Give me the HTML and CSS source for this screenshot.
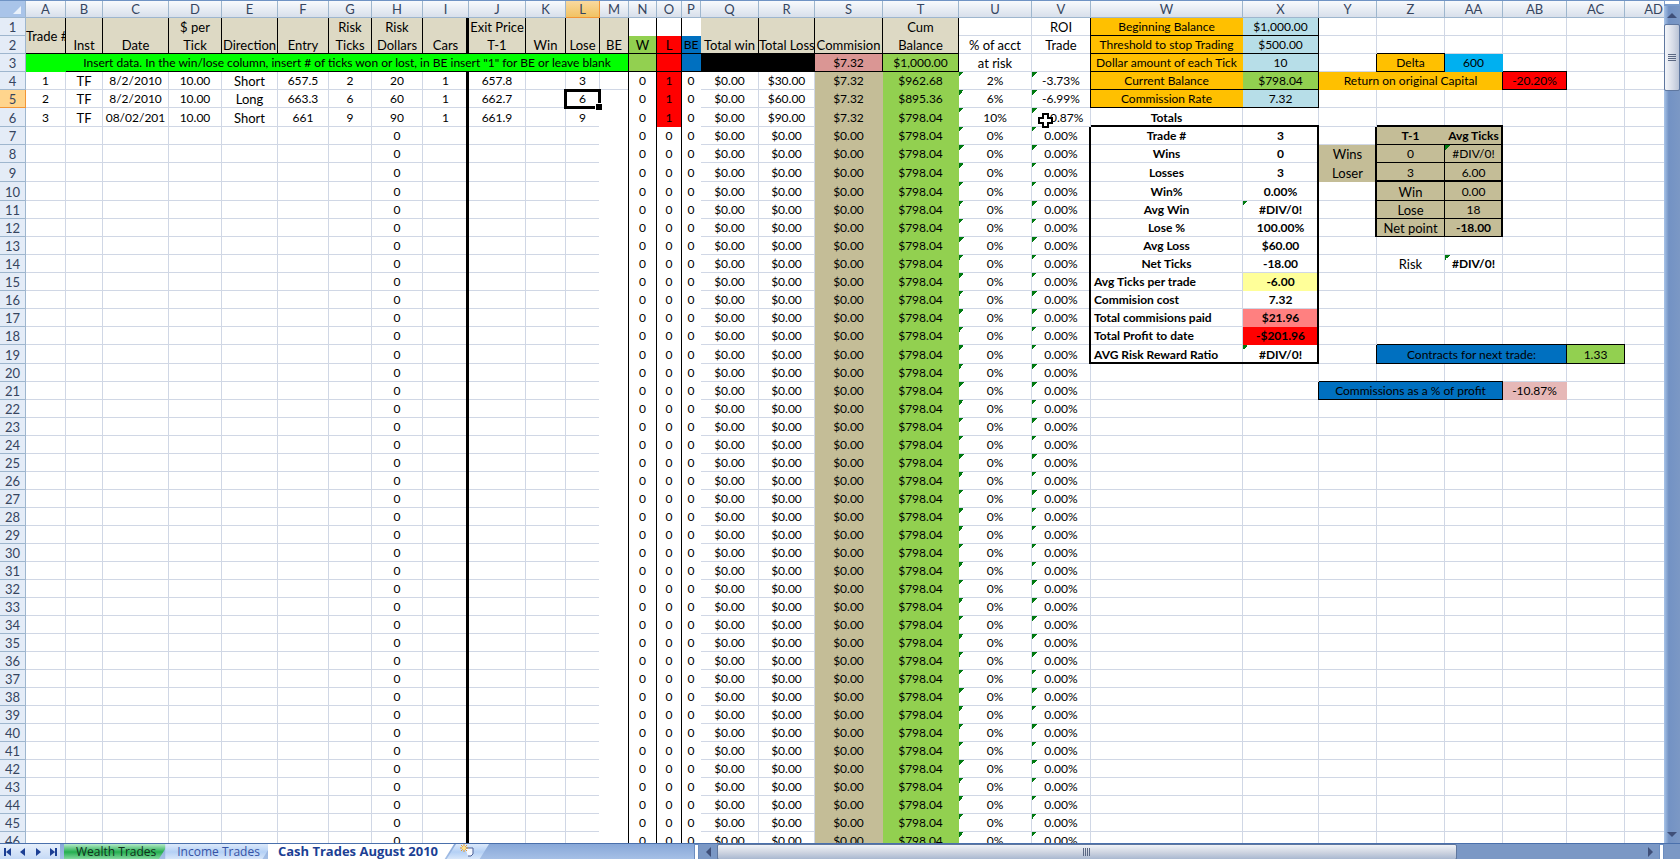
FILE: index.html
```html
<!DOCTYPE html>
<html lang="en">
<head>
  <meta charset="UTF-8" />
  <meta name="viewport" content="width=device-width, initial-scale=1.0" />
  <title>Cash Trades August 2010</title>
  <link rel="stylesheet" href="styles.css">
</head>
<body>
  <main class="workbook">
    <div class="sheet">
      <table class="grid">
        <colgroup id="cols"></colgroup>
        <thead><tr id="letters"></tr></thead>
        <tbody id="rows"></tbody>
      </table>
    </div>

    <div class="vscroll">
      <div class="split-h"></div>
      <button class="arrow" aria-label="Scroll up">
        <svg width="10" height="5" viewBox="0 0 10 5"><path d="M0 5 5 0l5 5z" fill="#3f4f78"/></svg>
      </button>
      <div class="vthumb"><i></i><i></i><i></i><i></i></div>
      <div class="vtrack"></div>
      <button class="arrow" aria-label="Scroll down">
        <svg width="10" height="5" viewBox="0 0 10 5"><path d="M0 0h10L5 5z" fill="#3f4f78"/></svg>
      </button>
    </div>

    <footer class="bottom">
      <nav class="tabs">
        <button class="nav" aria-label="First sheet"><svg width="8" height="8" viewBox="0 0 8 8"><path d="M0 0h2v8H0zM7 0v8L2 4z"/></svg></button>
        <button class="nav" aria-label="Previous sheet"><svg width="8" height="8" viewBox="0 0 8 8"><path d="M6 0v8L1 4z"/></svg></button>
        <button class="nav" aria-label="Next sheet"><svg width="8" height="8" viewBox="0 0 8 8"><path d="M2 0v8l5-4z"/></svg></button>
        <button class="nav" aria-label="Last sheet"><svg width="8" height="8" viewBox="0 0 8 8"><path d="M6 0h2v8H6zM1 0v8l5-4z"/></svg></button>
        <a href="#wealth" class="tab wealth">Wealth Trades</a>
        <a href="#income" class="tab income">Income Trades</a>
        <a href="#cash" class="tab current">Cash Trades August 2010</a>
        <button class="tab add" aria-label="Insert sheet">
          <svg width="15" height="13" viewBox="0 0 15 13">
            <path d="M5 4h8v6l-2 2H8" fill="#f4f8ff" stroke="#4a5f96"/>
            <path d="M4 0v8M0 4h8M1 1l6 6M7 1 1 7" stroke="#e2982c"/>
            <circle cx="4" cy="4" r="2" fill="#ffe48a"/>
          </svg>
        </button>
      </nav>
      <div class="hscroll">
        <div class="split-v"></div>
        <button class="arrow" aria-label="Scroll left">
          <svg width="5" height="10" viewBox="0 0 5 10"><path d="M5 0v10L0 5z" fill="#3f4f78"/></svg>
        </button>
        <div class="hthumb"><i></i><i></i><i></i><i></i></div>
        <div class="htrack"></div>
        <button class="arrow" aria-label="Scroll right">
          <svg width="5" height="10" viewBox="0 0 5 10"><path d="M0 0v10l5-5z" fill="#3f4f78"/></svg>
        </button>
        <div class="split-v"></div>
      </div>
    </footer>
  </main>
  <script src="script.js"></script>
</body>
</html>
```

FILE: styles.css
```css
* {
  box-sizing: border-box;
}

body {
  margin: 0;
  font-family: Lato, 'Liberation Sans', sans-serif;
  font-size: 13px;
  color: #000;
  background: #fff;
}

button {
  border: none;
  padding: 0;
  background: none;
}

.workbook {
  display: grid;
  grid-template-columns: 1fr 16px;
  grid-template-rows: 1fr 16px;
  height: 100vh;
  overflow: hidden;
}

.sheet {
  overflow: hidden;
  min-width: 0;
  min-height: 0;
}

/* cells */

.grid {
  table-layout: fixed;
  width: 0;
  border-collapse: separate;
  border-spacing: 0;
}

/* lines are inset shadows so that they cross without mitred corners */
.grid th,
.grid td {
  --right: #d0d7e5;
  --bottom: #d0d7e5;
  --rw: -1px;
  --bw: -1px;
  height: 18px;
  padding: 0 1px 1px 0;
  line-height: 16px;
  text-align: center;
  vertical-align: bottom;
  white-space: nowrap;
  box-shadow: inset var(--rw) 0 var(--right), inset 0 var(--bw) var(--bottom);
}

.grid td {
  position: relative;
}

.grid .tall td,
.grid .tall th {
  height: 19px;
}

.grid th {
  --right: #9eb6ce;
  --bottom: #9eb6ce;
  font-weight: normal;
  color: #36455f;
  background: #e4ecf7;
}

.grid thead th {
  background: linear-gradient(#f8fafd, #d6deea);
  border-top: 1px solid #6f93c4;
}

.grid thead .corner {
  background: #a9c4e9;
}

.corner svg {
  display: block;
  margin: 2px 3px 2px auto;
}

.grid thead .on {
  --right: #f29536;
  --bottom: #f29536;
  background: linear-gradient(#f9d99f, #f1c15f);
}

.grid tbody th.on {
  --right: #f29536;
  --bottom: #f29536;
  background: #ffd58d;
}

.grid .beige { --right: #ddd9c4; --bottom: #ddd9c4; background-color: #ddd9c4; }
.grid .tan { --right: #c4bd97; --bottom: #c4bd97; background-color: #c4bd97; }
.grid .lime { --right: #0f0; --bottom: #0f0; background-color: #0f0; }
.grid .green { --right: #92d050; --bottom: #92d050; background-color: #92d050; }
.grid .red { --right: #f00; --bottom: #f00; background-color: #f00; }
.grid .blue { --right: #0070c0; --bottom: #0070c0; background-color: #0070c0; }
.grid .sky { --right: #00b0f0; --bottom: #00b0f0; background-color: #00b0f0; }
.grid .pale { --right: #b7dee8; --bottom: #b7dee8; background-color: #b7dee8; }
.grid .orange { --right: #ffc000; --bottom: #ffc000; background-color: #ffc000; }
.grid .yellow { --right: #ff9; --bottom: #ff9; background-color: #ff9; }
.grid .salmon { --right: #ff8080; --bottom: #ff8080; background-color: #ff8080; }
.grid .rose { --right: #da9694; --bottom: #da9694; background-color: #da9694; }
.grid .pink { --right: #e6b8b7; --bottom: #e6b8b7; background-color: #e6b8b7; }
.grid .black { --right: #000; --bottom: #000; background-color: #000; }
.grid .white { --right: #fff; --bottom: #fff; background-color: #fff; }
.grid .open { --right: #fff; }

.grid .r1 { --right: #000; }
.grid .r2 { --right: #000; --rw: -2px; }
.grid .r3 { --right: #000; --rw: -3px; }
.grid .b1 { --bottom: #000; }
.grid .b2 { --bottom: #000; --bw: -2px; }

.grid .b1,
.grid .b2 {
  box-shadow: inset 0 var(--bw) var(--bottom), inset var(--rw) 0 var(--right);
}

.grid .mid { vertical-align: middle; }
.grid .bold { font-weight: bold; }

.grid .bold,
.grid .num,
.grid .orange,
.grid .blue,
.grid .lime,
.grid .flag {
  font-size: 12px;
}

.grid .label {
  padding-left: 3px;
  text-align: left;
}

.grid .flag {
  background-image: linear-gradient(135deg, #007a10 50%, transparent 50%);
  background-size: 5px 5px;
  background-repeat: no-repeat;
}

.selection {
  position: absolute;
  z-index: 1;
  inset: -1px -1px -1px -2px;
  border: 3px solid #000;
}

.selection::after {
  content: '';
  position: absolute;
  right: -4px;
  bottom: -4px;
  width: 6px;
  height: 6px;
  background: #000;
  border: 1px solid #fff;
  border-width: 1px 0 0 1px;
}

.cursor {
  position: absolute;
  z-index: 1;
  left: 6px;
  top: 5px;
}

/* scroll bars */

.vscroll {
  display: flex;
  flex-direction: column;
  background: linear-gradient(90deg, #a8c4e8, #7392c4 30%, #7b98c5);
}

.arrow {
  display: flex;
  align-items: center;
  justify-content: center;
  flex: 0 0 18px;
}

.split-h {
  flex: 0 0 6px;
  background: #fff;
  border: 1px solid #7b9ccb;
  border-bottom: 2px solid #7b9ccb;
}

.vthumb {
  display: flex;
  flex-direction: column;
  align-items: center;
  justify-content: center;
  gap: 1px;
  flex: 0 0 8%;
  border: 1px solid #5f779f;
  border-radius: 2px;
  background: linear-gradient(90deg, #f4f6fa, #d5dae6 60%, #b9c3d6);
}

.vthumb i {
  width: 8px;
  height: 1px;
  background: #5a6782;
}

.vtrack {
  flex: 1;
}

.bottom {
  grid-column: 1 / 3;
  display: grid;
  grid-template-columns: 694px 1fr;
  border-top: 1px solid #4a70ac;
  background: linear-gradient(#88a8d8, #a5bfe6);
}

.tabs {
  display: flex;
  align-items: stretch;
  font-family: 'Open Sans', 'DejaVu Sans', sans-serif;
  font-size: 12px;
}

.nav {
  display: flex;
  align-items: center;
  justify-content: center;
  width: 15px;
  fill: #1c3f94;
  background: linear-gradient(#e6effb, #c3d8f5);
}

.tab {
  position: relative;
  padding: 0 12px;
  line-height: 15px;
  color: #3553a5;
  text-decoration: none;
  white-space: nowrap;
  background: linear-gradient(#dce9fa, #b4d0f5 50%, #dce9fa);
  clip-path: polygon(0 0, 100% 0, calc(100% - 10px) 100%, 0 100%);
}

.wealth {
  margin-left: 4px;
  color: #10301c;
  background: linear-gradient(#b5eac8, #25ae50 50%, #8edda8);
}

.income {
  margin-left: -3px;
}

.current {
  margin-left: -4px;
  padding: 0 16px 0 10px;
  font-size: 13px;
  font-weight: bold;
  color: #1c3f94;
  background: #fff;
}

.add {
  width: 43px;
  margin-left: -8px;
  clip-path: polygon(10px 0, 100% 0, calc(100% - 10px) 100%, 0 100%);
}

.hscroll {
  display: flex;
  background: #7b98c5;
}

.split-v {
  flex: 0 0 5px;
  background: #fff;
  border: 1px solid #6b8dc0;
}

.hscroll .split-v:last-child {
  margin-right: 16px;
}

.hthumb {
  display: flex;
  align-items: center;
  justify-content: center;
  gap: 1px;
  flex: 4;
  border: 1px solid #5f779f;
  border-radius: 2px;
  background: linear-gradient(#f0f3f8, #d0d6e2 50%, #a9b8d0);
}

.hthumb i {
  width: 1px;
  height: 8px;
  background: #5a6782;
}

.htrack {
  flex: 1;
}
```

FILE: script.js
```js
const widths = {
  A: 40, B: 37, C: 66, D: 53, E: 56, F: 51, G: 43, H: 51, I: 46, J: 57,
  K: 40, L: 34, M: 29, N: 28, O: 25, P: 19, Q: 58, R: 56, S: 68, T: 76,
  U: 73, V: 59, W: 152, X: 76, Y: 58, Z: 68, AA: 58, AB: 64, AC: 58, AD: 58
};
const cols = Object.keys(widths);
const tall = [6, 9, 10, 19];
const active = { col: 'L', row: 5 };

// text, classes, span
const cells = {
  A1: ['Trade #', 'beige r1 b1 mid', { rows: 2 }],
  D1: ['$ per'], G1: ['Risk'], H1: ['Risk'], J1: ['Exit Price'], T1: ['Cum'],
  B2: ['Inst'], C2: ['Date'], D2: ['Tick'], E2: ['Direction'], F2: ['Entry'],
  G2: ['Ticks'], H2: ['Dollars'], I2: ['Cars'], J2: ['T-1'], K2: ['Win'],
  L2: ['Lose'], M2: ['BE'], Q2: ['Total win'], R2: ['Total Loss'],
  S2: ['Commision'], T2: ['Balance'],
  N1: ['', 'white r1'], O1: ['', 'white r1'], P1: ['', 'white'],
  N2: ['W', 'green r1 b1'], O2: ['L', 'red r1 b1'], P2: ['BE', 'blue b1'],
  A3: ['', 'lime'],
  B3: ['Insert data. In the win/lose column, insert # of ticks won or lost, in BE insert "1" for BE or leave blank', 'lime r1 b1', { cols: 12 }],
  N3: ['', 'green r1 b1'], O3: ['', 'red r1 b1'], P3: ['', 'blue b1'],
  Q3: ['', 'black'], R3: ['', 'black'],
  S3: ['$7.32', 'rose r1 b1'], T3: ['$1,000.00', 'green r1 b1'],
  U2: ['% of acct'], U3: ['at risk'], V1: ['ROI', 'r1'], V2: ['Trade', 'r1'], V3: ['', 'r1'],

  W1: ['Beginning Balance', 'orange b1'], X1: ['$1,000.00', 'pale r1 b1'],
  W2: ['Threshold to stop Trading', 'orange b1'], X2: ['$500.00', 'pale r1 b1'],
  W3: ['Dollar amount of each Tick', 'orange b1'], X3: ['10', 'pale r1 b1'],
  W4: ['Current Balance', 'orange b1'], X4: ['$798.04', 'green r1 b1'],
  W5: ['Commission Rate', 'orange b1'], X5: ['7.32', 'pale r1 b1'],
  W6: ['Totals', 'bold b2'], X6: ['', 'b2'],
  W7: ['Trade #', 'bold'], X7: ['3', 'bold r2'],
  W8: ['Wins', 'bold'], X8: ['0', 'bold r2'],
  W9: ['Losses', 'bold'], X9: ['3', 'bold r2'],
  W10: ['Win%', 'bold'], X10: ['0.00%', 'bold r2'],
  W11: ['Avg Win', 'bold'], X11: ['#DIV/0!', 'bold r2 flag'],
  W12: ['Lose %', 'bold'], X12: ['100.00%', 'bold r2'],
  W13: ['Avg Loss', 'bold'], X13: ['$60.00', 'bold r2'],
  W14: ['Net Ticks', 'bold'], X14: ['-18.00', 'bold r2'],
  W15: ['Avg Ticks per trade', 'bold label'], X15: ['-6.00', 'bold yellow r2'],
  W16: ['Commision cost', 'bold label'], X16: ['7.32', 'bold r2'],
  W17: ['Total commisions paid', 'bold label'], X17: ['$21.96', 'bold salmon r2'],
  W18: ['Total Profit to date', 'bold label'], X18: ['-$201.96', 'bold red r2'],
  W19: ['AVG Risk Reward Ratio', 'bold label b2'], X19: ['#DIV/0!', 'bold r2 b2 flag'],

  Z2: ['', 'b1'], Y3: ['', 'r1'], Z3: ['Delta', 'orange r1 b1'], AA3: ['600', 'sky'],
  AB3: ['', 'b1'], Y4: ['Return on original Capital', 'orange r1', { cols: 3 }],
  AB4: ['-20.20%', 'red r1 b1'],
  Z6: ['', 'b2'], AA6: ['', 'b2'], Y7: ['', 'r2'],
  Z7: ['T-1', 'tan bold b1'], AA7: ['Avg Ticks', 'tan bold b1 r2'],
  Y8: ['Wins', 'tan r2'], Z8: ['0', 'tan r1 b1'], AA8: ['#DIV/0!', 'tan b1 r2 flag'],
  Y9: ['Loser', 'tan r2'], Z9: ['3', 'tan r1 b2'], AA9: ['6.00', 'tan b2 r2'],
  Y10: ['', 'r2'], Z10: ['Win', 'tan r1 b1'], AA10: ['0.00', 'tan b1 r2'],
  Y11: ['', 'r2'], Z11: ['Lose', 'tan r1 b1'], AA11: ['18', 'tan b1 r2'],
  Y12: ['', 'r2'], Z12: ['Net point', 'tan r1 b1'], AA12: ['-18.00', 'tan bold b1 r2'],
  Z14: ['Risk'], AA14: ['#DIV/0!', 'bold flag'],
  Z18: ['', 'b1'], AA18: ['', 'b1'], AB18: ['', 'b1'], AC18: ['', 'b1'], Y19: ['', 'r1'],
  Z19: ['Contracts for next trade:', 'blue r1 b1', { cols: 3 }], AC19: ['1.33', 'green r1 b1'],
  Y20: ['', 'b1'], Z20: ['', 'b1'], AA20: ['', 'b1'], X21: ['', 'r1'],
  Y21: ['Commissions as a % of profit', 'blue r1 b1', { cols: 3 }], AB21: ['-10.87%', 'pink']
};

const trades = {
  4: { A: '1', B: 'TF', C: '8/2/2010', D: '10.00', E: 'Short', F: '657.5', G: '2', H: '20', I: '1', J: '657.8', L: '3', O: '1', R: '$30.00', S: '$7.32', T: '$962.68', U: '2%', V: '-3.73%' },
  5: { A: '2', B: 'TF', C: '8/2/2010', D: '10.00', E: 'Long', F: '663.3', G: '6', H: '60', I: '1', J: '662.7', L: '6', O: '1', R: '$60.00', S: '$7.32', T: '$895.36', U: '6%', V: '-6.99%' },
  6: { A: '3', B: 'TF', C: '08/02/201', D: '10.00', E: 'Short', F: '661', G: '9', H: '90', I: '1', J: '661.9', L: '9', O: '1', R: '$90.00', S: '$7.32', T: '$798.04', U: '10%', V: '-10.87%' }
};

// formulas filled down for rows with no trade yet
const filled = { H: '0', N: '0', O: '0', P: '0', Q: '$0.00', R: '$0.00', S: '$0.00', T: '$798.04', U: '0%', V: '0.00%' };

function styleFor(col, row) {
  const i = cols.indexOf(col);
  if (row < 3 && i < cols.indexOf('U')) {
    return 'beige ' + (col === 'I' ? 'r3' : 'r1') + (row === 2 ? ' b1' : '');
  }
  if (row < 4) return '';
  if (col === 'I') return 'r3';
  if (col === 'L') return row > 4 ? 'open' : '';
  if (col === 'M') return row > 4 ? 'white r1' : 'r1';
  if (col === 'N') return 'white r1';
  if (col === 'O') return (row < 7 ? 'red' : 'white') + ' r1';
  if (col === 'P') return 'white';
  if (col === 'S') return 'tan';
  if (col === 'T') return 'green';
  if (col === 'U') return 'flag';
  if (col === 'V') return 'flag' + (row < 6 ? ' r1' : row > 6 && row < 20 ? ' r2' : '');
  return '';
}

function buildRow(row) {
  const tr = document.createElement('tr');
  if (tall.includes(row)) tr.className = 'tall';
  tr.innerHTML = `<th class="${row === active.row ? 'on' : ''}">${row}</th>`;
  let skip = row === 2 ? 1 : 0;
  for (const col of cols) {
    if (skip > 0) { skip--; continue; }
    const [own, cls, span] = cells[col + row] || [];
    const td = document.createElement('td');
    let text = own || '';
    if (own === undefined && row > 3) {
      text = (trades[row] && trades[row][col]) || filled[col] || '';
    }
    td.textContent = text;
    td.className = cls || styleFor(col, row);
    if (/^[-$]*[\d.,/]+%?$/.test(text)) td.classList.add('num');
    if (span && span.cols) { td.colSpan = span.cols; skip = span.cols - 1; }
    if (span && span.rows) td.rowSpan = span.rows;
    if (col === active.col && row === active.row) {
      td.insertAdjacentHTML('beforeend', '<span class="selection"></span>');
    }
    if (col === 'V' && row === 6) {
      td.insertAdjacentHTML('beforeend', `<svg class="cursor" width="16" height="16" viewBox="0 0 16 16">
        <path d="M5 1h5v4h4v5h-4v4H5v-4H1V5h4z" fill="#fff" stroke="#000" stroke-width="2"/></svg>`);
    }
    tr.appendChild(td);
  }
  return tr;
}

document.getElementById('cols').innerHTML =
  '<col style="width:26px">' + cols.map(c => `<col style="width:${widths[c]}px">`).join('');
document.getElementById('letters').innerHTML =
  '<th class="corner"><svg width="10" height="10" viewBox="0 0 10 10"><path d="M9 1v8H1z" fill="#e9f1fb"/></svg></th>' +
  cols.map(c => `<th class="${c === active.col ? 'on' : ''}">${c}</th>`).join('');
for (let row = 1; row <= 46; row++) {
  document.getElementById('rows').appendChild(buildRow(row));
}
```
